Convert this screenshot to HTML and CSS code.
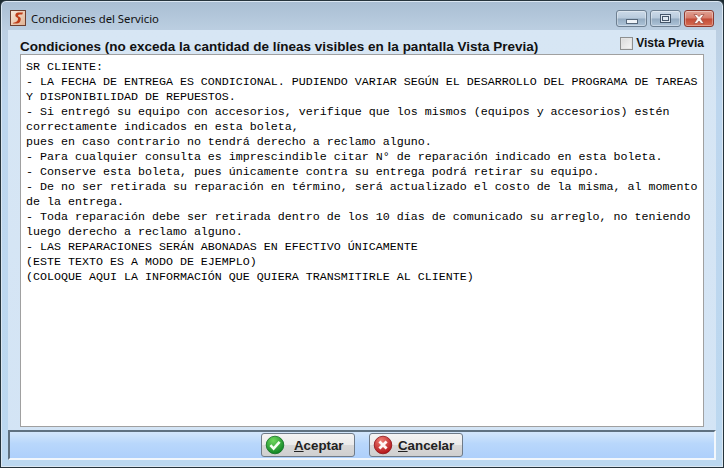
FILE: index.html
```html
<!DOCTYPE html>
<html lang="es">
<head>
<meta charset="utf-8">
<title>Condiciones del Servicio</title>
<link rel="stylesheet" href="styles.css">
</head>
<body>
<div class="window">
  <header class="titlebar">
    <div class="app-icon">
      <svg width="16" height="16" viewBox="0 0 16 16"><defs><linearGradient id="ic" x1="0" y1="0" x2="1" y2="1"><stop offset="0" stop-color="#f6e8dc"/><stop offset="1" stop-color="#e0b090"/></linearGradient></defs><rect x="0.5" y="0.5" width="15" height="15" fill="url(#ic)" stroke="#6e3f30"/><path d="M13 2.6H8.2C6.4 2.6 5.6 3.6 5.4 5C5.2 6.4 6 7 7 7.4C7.9 7.8 8.2 8.2 8 9.2C7.7 11 6.6 12.4 3.4 12.7L2.6 13.6H6.6C9.2 13.6 10.4 11.8 10.7 9.8C11 8 10.2 7.2 9.2 6.8C8.2 6.4 7.9 6 8.2 5.2C8.4 4.7 8.9 4.4 9.8 4.4H12.2Z" fill="#bf3c18"/></svg>
    </div>
    <div class="title">Condiciones del Servicio</div>
    <div class="controls">
      <div class="ctl ctl-min"><span class="glyph-min"></span></div>
      <div class="ctl ctl-max"><span class="glyph-max"></span></div>
      <div class="ctl ctl-close">
        <svg width="16" height="10" viewBox="0 0 16 10"><path d="M3 0.5H6L8 2.6L10 0.5H13L9.8 4.8L13 9.5H10L8 7L6 9.5H3L6.2 4.8Z" fill="#fbf3f0" stroke="#8c3a30" stroke-width="0.6"/></svg>
      </div>
    </div>
  </header>
  <main class="client">
    <div class="label-row">
      <div class="heading">Condiciones (no exceda la cantidad de líneas visibles en la pantalla Vista Previa)</div>
      <label class="check"><span class="box"></span>Vista Previa</label>
    </div>
    <div class="editor">SR CLIENTE:
- LA FECHA DE ENTREGA ES CONDICIONAL. PUDIENDO VARIAR SEGÚN EL DESARROLLO DEL PROGRAMA DE TAREAS
Y DISPONIBILIDAD DE REPUESTOS.
- Si entregó su equipo con accesorios, verifique que los mismos (equipos y accesorios) estén
correctamente indicados en esta boleta,
pues en caso contrario no tendrá derecho a reclamo alguno.
- Para cualquier consulta es imprescindible citar N° de reparación indicado en esta boleta.
- Conserve esta boleta, pues únicamente contra su entrega podrá retirar su equipo.
- De no ser retirada su reparación en término, será actualizado el costo de la misma, al momento
de la entrega.
- Toda reparación debe ser retirada dentro de los 10 días de comunicado su arreglo, no teniendo
luego derecho a reclamo alguno.
- LAS REPARACIONES SERÁN ABONADAS EN EFECTIVO ÚNICAMENTE
(ESTE TEXTO ES A MODO DE EJEMPLO)
(COLOQUE AQUI LA INFORMACIÓN QUE QUIERA TRANSMITIRLE AL CLIENTE)</div>
    <footer class="toolbar">
      <button class="btn btn-ok" type="button">
        <svg width="20" height="20" viewBox="0 0 20 20"><defs><radialGradient id="g" cx="40%" cy="25%" r="80%"><stop offset="0" stop-color="#6fd85c"/><stop offset="1" stop-color="#0a8022"/></radialGradient></defs><circle cx="10" cy="10" r="8.8" fill="url(#g)" stroke="#0c6e20" stroke-width="0.8"/><path d="M5.4 10.2L8.6 13.6L14.6 6.8" fill="none" stroke="#f4fff0" stroke-width="2.6"/></svg>
        <span class="btn-text"><u>A</u>ceptar</span>
      </button>
      <button class="btn btn-cancel" type="button">
        <svg width="20" height="20" viewBox="0 0 20 20"><defs><radialGradient id="r" cx="40%" cy="25%" r="80%"><stop offset="0" stop-color="#ee7f74"/><stop offset="1" stop-color="#b00d12"/></radialGradient></defs><circle cx="10" cy="10" r="8.8" fill="url(#r)" stroke="#8a1015" stroke-width="0.8"/><path d="M6.4 6.4L13.6 13.6M13.6 6.4L6.4 13.6" fill="none" stroke="#fff6f4" stroke-width="2.8"/></svg>
        <span class="btn-text"><u>C</u>ancelar</span>
      </button>
    </footer>
  </main>
</div>
</body>
</html>
```
FILE: styles.css
```css
* { box-sizing: border-box; }
html, body { margin: 0; padding: 0; }
body { width: 724px; height: 468px; overflow: hidden; background: #1c2a30; }
.window {
  width: 724px; height: 468px;
  display: flex; flex-direction: column;
  border: 1px solid #26343c;
  border-radius: 6px 6px 0 0;
  background: linear-gradient(180deg, #a9bed3 0, #bccfe2 30px, #bdd6ee 100px, #bcd8f0 100%);
  box-shadow: inset 0 0 0 1px #dbe7f2;
  padding: 0 7px 7px;
}
.titlebar {
  height: 29px; flex: none;
  padding-top: 5px;
  display: flex; align-items: center;
  font-family: "Noto Sans", "Open Sans", sans-serif;
  font-size: 11.3px; color: #111;
}
.app-icon { width: 16px; height: 16px; margin: 0 5px 0 2px; display: flex; }
.title { flex: 1; }
.controls { display: flex; gap: 3px; align-self: flex-start; margin: 4px 2px 0 0; height: 17px; }
.ctl {
  height: 17px; width: 31px;
  border: 1px solid #6d7f91; border-radius: 3px;
  display: flex; align-items: center; justify-content: center;
  background: linear-gradient(180deg, #ccdae8 0, #b8cadc 48%, #93aac0 52%, #aec4d9 100%);
  box-shadow: inset 0 0 0 1px rgba(255,255,255,.35);
}
.ctl-close {
  width: 30px; border-color: #8c3a30;
  background: linear-gradient(180deg, #e0a294 0, #d67b6a 48%, #c24a36 52%, #d66d52 100%);
}
.glyph-min { display: block; width: 12px; height: 5px; margin-top: 6px; background: #eef3f8; border: 1px solid #56677a; }
.glyph-max { display: block; width: 11px; height: 9px; background: #dfe8f1; border: 1px solid #45566a; box-shadow: inset 0 0 0 1px #dfe8f1, inset 0 0 0 2px #45566a; }
.client {
  flex: 1; min-height: 0;
  display: flex; flex-direction: column;
  background: linear-gradient(180deg, #d7e6f4 0, #d3e4f5 100%);
}
.label-row {
  height: 24px; flex: none;
  display: flex; justify-content: space-between; align-items: flex-end;
  padding: 0 12px;
  font-family: "Liberation Sans", Arial, sans-serif;
  font-weight: bold; color: #111;
}
.heading { font-size: 13.5px; line-height: 15px; }
.check { display: flex; align-items: center; gap: 3px; font-size: 12px; line-height: 15px; margin-bottom: 3px; }
.box {
  width: 13px; height: 13px; display: block;
  border: 1px solid #8e8f8f;
  background: linear-gradient(135deg, #d9d9d9, #f6f6f6);
  box-shadow: inset 0 0 0 1px #e4e4e4;
}
.editor {
  flex: none; height: 373px;
  margin: 0 12px;
  background: #fff; border: 1px solid #a0a0a0;
  padding: 5px 5px 0;
  font-family: "Liberation Mono", "Courier New", monospace;
  font-size: 11.67px; line-height: 15px; color: #000;
  white-space: pre; overflow: hidden;
}
.toolbar {
  flex: 1; min-height: 0;
  margin-top: 3px;
  display: flex; justify-content: center; align-items: flex-start; gap: 14px;
  padding-top: 1px;
  border-top: 2px solid #5f7180;
  border-left: 2px solid #5f7180;
  border-right: 2px solid #f2f7fc;
  border-bottom: 2px solid #f2f7fc;
  background: linear-gradient(180deg, #d3e6fb 0, #b8d7fb 45%, #aed0fb 100%);
}
.btn {
  width: 94px; height: 24px; padding: 0 0 0 3px;
  display: flex; align-items: center; gap: 9px;
  border: 1px solid #6f7b88; border-radius: 3px;
  background: linear-gradient(180deg, #f4f4f4 0, #ebebeb 48%, #d8d8d8 52%, #cfcfcf 100%);
  font-family: "Liberation Sans", Arial, sans-serif;
  font-size: 13.3px; font-weight: bold; color: #222;
}
.btn-cancel { gap: 5px; }
```
